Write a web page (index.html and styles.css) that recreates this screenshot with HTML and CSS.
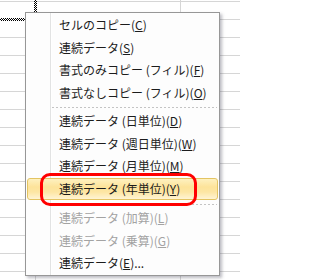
FILE: index.html
```html
<!DOCTYPE html>
<html lang="ja">
<head>
<meta charset="utf-8">
<title>連続データ メニュー</title>
<link rel="stylesheet" href="styles.css">
</head>
<body>
<div class="sheet">
  <div class="ants ants-v"></div>
  <div class="ants ants-h"></div>

  <div class="menu">
    <div class="group">
      <div class="item">セルのコピー(<u>C</u>)</div>
      <div class="item">連続データ(<u>S</u>)</div>
      <div class="item">書式のみコピー (フィル)(<u>F</u>)</div>
      <div class="item">書式なしコピー (フィル)(<u>O</u>)</div>
    </div>
    <div class="sep sep1"></div>
    <div class="group">
      <div class="item">連続データ (日単位)(<u>D</u>)</div>
      <div class="item">連続データ (週日単位)(<u>W</u>)</div>
      <div class="item">連続データ (月単位)(<u>M</u>)</div>
      <div class="item active">連続データ (年単位)(<u>Y</u>)</div>
    </div>
    <div class="sep sep2"></div>
    <div class="group">
      <div class="item disabled">連続データ (加算)(<u>L</u>)</div>
      <div class="item disabled">連続データ (乗算)(<u>G</u>)</div>
      <div class="item">連続データ(<u>E</u>)...</div>
    </div>
  </div>

  <div class="mark"></div>
</div>
</body>
</html>
```

FILE: styles.css
```css
html, body {
  margin: 0;
  padding: 0;
  background: #ffffff;
}

.sheet {
  position: relative;
  width: 240px;
  height: 280px;
  overflow: hidden;
  background-color: #ffffff;
  background-image:
    linear-gradient(to right, transparent 35px, #d6d6d6 35px, #d6d6d6 36px, transparent 36px, transparent 180px, #d6d6d6 180px, #d6d6d6 181px, transparent 181px),
    repeating-linear-gradient(to bottom, transparent 0, transparent 1px, #d6d6d6 1px, #d6d6d6 2px, transparent 2px, transparent 18px);
}

.ants {
  position: absolute;
  background-image: repeating-conic-gradient(#000 0 25%, #fff 0 50%);
  background-size: 2px 2px;
}

.ants-v {
  left: 34px;
  top: 0;
  width: 3px;
  height: 21px;
}

.ants-h {
  left: 0;
  top: 18px;
  width: 37px;
  height: 3px;
}

.menu {
  position: absolute;
  left: 25px;
  top: 12px;
  width: 195px;
  height: 264px;
  box-sizing: border-box;
  border: 1px solid #979797;
  padding-top: 1px;
  background-color: #fdfdfd;
  background-image: linear-gradient(to right, transparent 24px, #e2e3e3 24px, #e2e3e3 25px, #ffffff 25px, #ffffff 26px, transparent 26px);
  box-shadow: 2px 2px 3px rgba(60, 60, 80, 0.35);
  font-family: "Noto Sans CJK JP", "Noto Sans", sans-serif;
  font-size: 12px;
  color: #1c1c1c;
  display: flex;
  flex-direction: column;
}

.item {
  height: 22.5px;
  box-sizing: border-box;
  display: flex;
  align-items: center;
  padding-left: 33px;
  white-space: nowrap;
  line-height: 1;
}

.item u {
  text-underline-offset: 1px;
}

.item.disabled {
  color: #a3a3a3;
}

.item.active {
  margin: 0 1px;
  padding-left: 31px;
  border: 1px solid #e3c462;
  border-radius: 3px;
  background: linear-gradient(to bottom, #fef1c0 0%, #fde39a 40%, #fde6a3 65%, #fff4d4 100%);
}

.sep {
  position: relative;
}

.sep::after {
  content: "";
  position: absolute;
  left: 26px;
  right: 2px;
  height: 1px;
  background-image: repeating-linear-gradient(to right, #c4c4c4 0, #c4c4c4 2px, transparent 2px, transparent 4px);
}

.sep1 {
  height: 6px;
}

.sep1::after {
  top: 3px;
}

.sep2 {
  height: 7px;
}

.sep2::after {
  top: 4px;
}

.mark {
  position: absolute;
  left: 40px;
  top: 173px;
  width: 157px;
  height: 33px;
  box-sizing: border-box;
  border: 3px solid #ff0000;
  border-radius: 10px;
}
```
